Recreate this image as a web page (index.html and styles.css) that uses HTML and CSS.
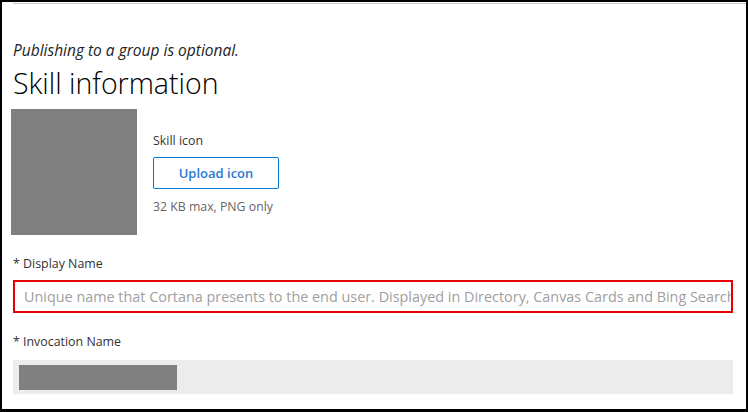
FILE: index.html
```html
<!DOCTYPE html>
<html>
<head>
<meta charset="utf-8">
<link rel="stylesheet" href="styles.css">
</head>
<body>
<div class="frame">
  <div class="topline"></div>
  <div class="content">
    <p class="note">Publishing to a group is optional.</p>
    <h1 class="title">Skill information</h1>
    <div class="icon-row">
      <div class="icon-preview"></div>
      <div class="icon-info">
        <div class="label">Skill icon</div>
        <button class="upload">Upload icon</button>
        <div class="hint">32 KB max, PNG only</div>
      </div>
    </div>
    <div class="field">
      <div class="label">* Display Name</div>
      <div class="input error"><span class="placeholder">Unique name that Cortana presents to the end user. Displayed in Directory, Canvas Cards and Bing Search</span></div>
    </div>
    <div class="field second">
      <div class="label">* Invocation Name</div>
      <div class="input disabled"><div class="redact"></div></div>
    </div>
  </div>
</div>
</body>
</html>
```

FILE: styles.css
```css
html, body { margin: 0; padding: 0; background: #fff; }
body { font-family: "Open Sans", "Noto Sans", sans-serif; color: #333; }
.frame {
  box-sizing: border-box;
  width: 748px;
  height: 412px;
  border: solid #000;
  border-width: 2px 2px 3px 2px;
  padding: 1px 0 0 9px;
  overflow: hidden;
}
.topline { height: 1px; margin-left: 2px; background: #c8c8c8; }
.note {
  margin: 37px 0 0 2px;
  font-size: 15.5px;
  font-style: italic;
  line-height: 18px;
  color: #222;
}
.title {
  margin: 5px 0 0 2px;
  font-size: 28.5px;
  font-weight: 300;
  line-height: 38px;
  color: #000;
}
.icon-row { display: flex; margin-top: 7px; }
.icon-preview { width: 126px; height: 126px; background: #808080; }
.icon-info { margin-left: 16px; padding-top: 24px; }
.label { font-size: 12.4px; line-height: 16px; color: #333; }
.upload {
  display: block;
  margin-top: 8px;
  width: 126px;
  height: 32px;
  box-sizing: border-box;
  border: 1px solid #0078d4;
  border-radius: 2px;
  background: #fff;
  color: #2b78d0;
  font-family: "Open Sans", "Noto Sans", sans-serif;
  font-size: 13px;
  font-weight: 600;
}
.hint { margin-top: 10px; font-size: 12.3px; line-height: 16px; color: #666; }
.field { margin: 21px 0 0 2px; width: 720px; }
.field.second { margin-top: 21px; }
.field .label { margin-bottom: 8px; }
.second .label { margin-bottom: 10px; }
.input { height: 33px; box-sizing: border-box; overflow: hidden; white-space: nowrap; }
.input.error { border: 2px solid #e60000; padding: 0 9px; }
.placeholder { font-size: 14.4px; line-height: 29px; color: #a0a0a0; }
.input.disabled { background: #ececec; padding: 5px 6px; height: 34px; }
.redact { width: 158px; height: 25px; background: #808080; }
```
